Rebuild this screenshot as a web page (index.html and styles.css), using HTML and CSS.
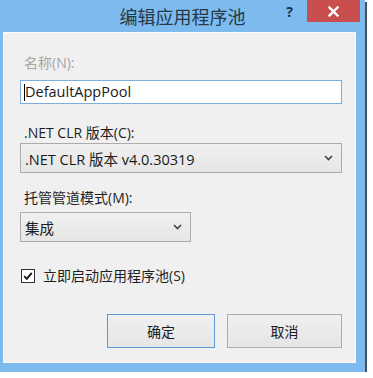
FILE: index.html
```html
<!DOCTYPE html>
<html lang="zh-CN">
<head>
<meta charset="utf-8">
<title>编辑应用程序池</title>
<link rel="stylesheet" href="styles.css">
</head>
<body>
<div class="window">
  <div class="titlebar">
    <div class="tb-left"></div>
    <div class="tb-title">编辑应用程序池</div>
    <div class="tb-right">
      <span class="help">?</span>
      <span class="close">
        <svg width="11" height="11" viewBox="0 0 11 11"><path d="M1.5 1.5 L9.5 9.5 M9.5 1.5 L1.5 9.5" stroke="#fff" stroke-width="2.4" stroke-linecap="square"/></svg>
      </span>
    </div>
  </div>
  <div class="panel">
    <div class="label disabled l1">名称(N):</div>
    <div class="input"><span class="caret"></span>DefaultAppPool</div>
    <div class="label l2">.NET CLR 版本(C):</div>
    <div class="select wide">
      <span class="sel-text">.NET CLR 版本 v4.0.30319</span>
      <svg class="chev" width="9" height="6" viewBox="0 0 9 6"><path d="M1 1 L4.5 4.5 L8 1" fill="none" stroke="#444" stroke-width="1.6"/></svg>
    </div>
    <div class="label l3">托管管道模式(M):</div>
    <div class="select narrow">
      <span class="sel-text">集成</span>
      <svg class="chev" width="9" height="6" viewBox="0 0 9 6"><path d="M1 1 L4.5 4.5 L8 1" fill="none" stroke="#444" stroke-width="1.6"/></svg>
    </div>
    <div class="check-row">
      <span class="checkbox">
        <svg width="12" height="12" viewBox="0 0 12 12"><path d="M2.2 6.2 L4.8 8.8 L9.8 2.8" fill="none" stroke="#1a1a1a" stroke-width="1.9"/></svg>
      </span>
      <span class="check-label">立即启动应用程序池(S)</span>
    </div>
    <div class="buttons">
      <div class="btn default">确定</div>
      <div class="btn cancel">取消</div>
    </div>
  </div>
</div>
</body>
</html>
```
FILE: styles.css
```css
html, body {
  margin: 0;
  padding: 0;
  background: #ffffff;
}
body {
  font-family: "Open Sans", "Noto Sans CJK SC", sans-serif;
  color: #1e1e1e;
}
.window {
  width: 365px;
  height: 372px;
  background: #7dbbee;
  box-shadow: 2px 2px 0 #44505c;
  display: flex;
  flex-direction: column;
}
.titlebar {
  height: 32px;
  display: grid;
  grid-template-columns: 1fr auto 1fr;
  align-items: start;
}
.tb-title {
  font-family: "Noto Sans CJK SC", sans-serif;
  font-size: 18px;
  line-height: 32px;
  color: #26384a;
  letter-spacing: 0;
}
.tb-right {
  display: flex;
  justify-content: flex-end;
  align-items: flex-start;
  padding-right: 5px;
}
.help {
  font-family: "Open Sans", sans-serif;
  font-weight: 700;
  font-size: 14px;
  line-height: 22px;
  color: #1c2e48;
  margin-right: 14px;
  margin-top: 1px;
}
.close {
  width: 53px;
  height: 22px;
  background: #c94f4f;
  display: flex;
  align-items: center;
  justify-content: center;
}
.panel {
  margin: 0 9px 9px 3px;
  flex: 1;
  background: #f0f0f0;
  border: 1px solid #fbfbfb;
  box-sizing: border-box;
  padding: 20px 0 0 16px;
  display: flex;
  flex-direction: column;
  align-items: flex-start;
}
.label {
  font-size: 14px;
  line-height: 20px;
  padding-left: 4px;
}
.disabled {
  color: #a6a6a6;
}
.input {
  margin-top: 7px;
  width: 322px;
  height: 24px;
  box-sizing: border-box;
  border: 1px solid #7eaede;
  background: #ffffff;
  font-size: 14.5px;
  line-height: 22px;
  padding-left: 3px;
  display: flex;
  align-items: center;
  color: #1a1a1a;
}
.caret {
  width: 1px;
  height: 17px;
  background: #000;
  margin-right: 0;
}
.l2 {
  margin-top: 19px;
}
.select {
  height: 30px;
  box-sizing: border-box;
  border: 1px solid #acacac;
  background: linear-gradient(#f0f0f0, #e6e6e6);
  display: flex;
  align-items: center;
  justify-content: space-between;
  padding: 0 8px 0 4px;
  font-size: 14.5px;
  color: #1a1a1a;
}
.select.wide {
  width: 322px;
}
.select.narrow {
  width: 171px;
}
.l3 {
  margin-top: 15px;
}
.l3 + .select {
  margin-top: 4px;
}
.check-row {
  margin-top: 24px;
  height: 20px;
  display: flex;
  align-items: center;
  padding-left: 1px;
}
.checkbox {
  width: 14px;
  height: 14px;
  box-sizing: border-box;
  border: 1px solid #333;
  background: #fff;
  display: flex;
  align-items: center;
  justify-content: center;
}
.check-label {
  margin-left: 8px;
  font-size: 14px;
  line-height: 20px;
}
.buttons {
  margin-top: 28px;
  margin-left: 87px;
  display: flex;
  gap: 12px;
}
.btn {
  height: 34px;
  box-sizing: border-box;
  border: 1px solid #acacac;
  background: linear-gradient(#f0f0f0, #e5e5e5);
  display: flex;
  align-items: center;
  justify-content: center;
  font-size: 14px;
  color: #1a1a1a;
}
.btn.default {
  width: 108px;
  border-color: #5b9ad3;
}
.btn.cancel {
  width: 115px;
}
```
